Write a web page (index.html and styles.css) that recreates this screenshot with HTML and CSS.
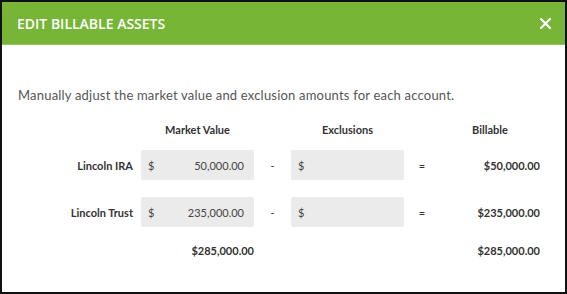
FILE: index.html
```html
<!DOCTYPE html>
<html lang="en">
<head>
    <meta charset="UTF-8">
    <meta name="viewport" content="width=device-width, initial-scale=1.0">
    <title>Edit Billable Assets</title>
    <link rel="stylesheet" href="styles.css">
</head>
<body>
    <div class="modal">
        <div class="modal-header">
            <h2>EDIT BILLABLE ASSETS</h2>
            <button class="close-btn" aria-label="Close">
                <svg width="11" height="11" viewBox="0 0 11 11">
                    <path d="M1 1 L10 10 M10 1 L1 10" stroke="#fff" stroke-width="2.2" stroke-linecap="square"/>
                </svg>
            </button>
        </div>
        <div class="modal-body">
            <p class="intro">Manually adjust the market value and exclusion amounts for each account.</p>

            <div class="assets-grid">
                <div></div>
                <div class="col-head">Market Value</div>
                <div></div>
                <div class="col-head">Exclusions</div>
                <div></div>
                <div class="col-head">Billable</div>

                <div class="account">Lincoln IRA</div>
                <div class="money-input"><span>$</span><span>50,000.00</span></div>
                <div class="op">-</div>
                <div class="money-input"><span>$</span><span></span></div>
                <div class="op">=</div>
                <div class="billable">$50,000.00</div>

                <div class="account">Lincoln Trust</div>
                <div class="money-input"><span>$</span><span>235,000.00</span></div>
                <div class="op">-</div>
                <div class="money-input"><span>$</span><span></span></div>
                <div class="op">=</div>
                <div class="billable">$235,000.00</div>

                <div></div>
                <div class="total">$285,000.00</div>
                <div></div>
                <div></div>
                <div></div>
                <div class="total">$285,000.00</div>
            </div>
        </div>
    </div>
</body>
</html>
```

FILE: styles.css
```css
html, body {
    margin: 0;
    height: 100%;
}

body {
    font-family: Lato, "Open Sans", sans-serif;
    background-color: #fff;
}

.modal {
    box-sizing: border-box;
    height: 294px;
    border: 2px solid #111;
    background-color: #fff;
}

.modal-header {
    display: flex;
    justify-content: space-between;
    align-items: center;
    height: 42px;
    padding: 0 14px 0 15px;
    background-color: #76b536;
    border-bottom: 1px solid #8fc75a;
}

.modal-header h2 {
    margin: 0;
    color: #fff;
    font-family: "Open Sans", sans-serif;
    font-size: 14px;
    font-weight: 600;
    letter-spacing: 0;
}

.close-btn {
    display: flex;
    background: none;
    border: none;
    padding: 0;
    cursor: pointer;
}

.modal-body {
    padding: 0 25px 0 16px;
}

.intro {
    margin: 0;
    padding-top: 42px;
    font-size: 13px;
    color: #555;
    letter-spacing: 0.2px;
}

.assets-grid {
    display: grid;
    grid-template-columns: 123px 113px 37px 113px 36px 100px;
    margin-top: 20px;
    font-size: 11px;
    color: #333;
}

.col-head {
    text-align: center;
    font-weight: bold;
    height: 27px;
}

.money-input {
    display: flex;
    justify-content: space-between;
    align-items: center;
    height: 30px;
    padding: 0 10px 0 7px;
    margin-bottom: 17px;
    background-color: #ebebeb;
    border-radius: 2px;
    color: #444;
}

.account,
.op,
.billable {
    align-self: center;
    margin-top: -17px;
}

.account {
    text-align: right;
    font-weight: bold;
    padding-right: 8px;
}

.op {
    text-align: center;
}

.billable,
.total {
    text-align: right;
    font-weight: bold;
}
```
